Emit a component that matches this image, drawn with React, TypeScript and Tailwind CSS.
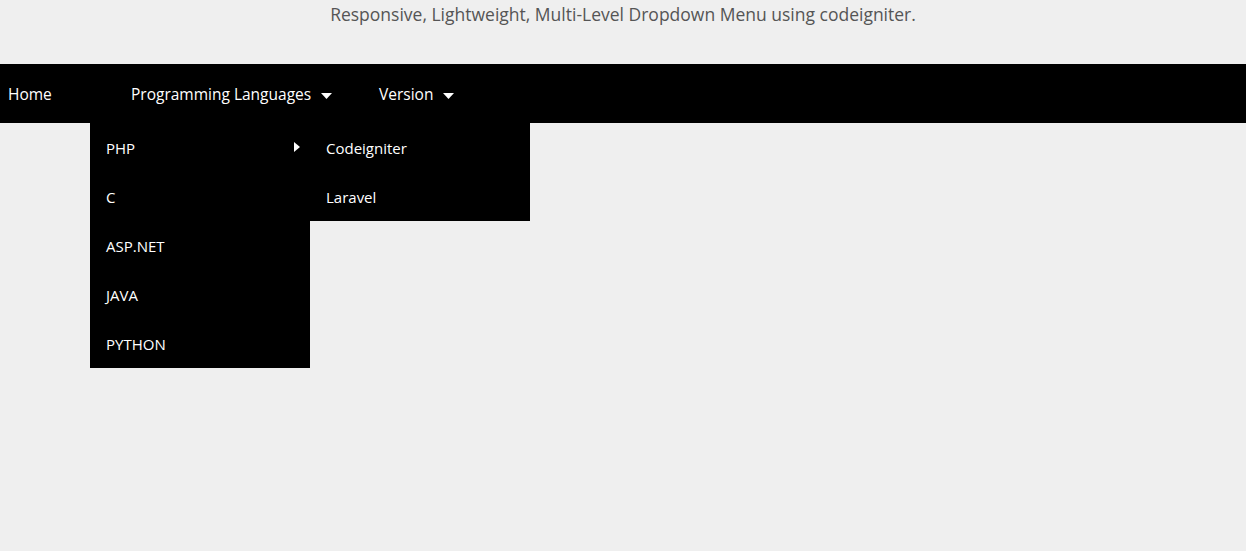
import React from 'react';

const FONT = { fontFamily: "'Open Sans', Roboto, sans-serif" };

function Caret({ dir = 'down' }: { dir?: 'down' | 'right' }) {
  if (dir === 'right') {
    return (
      <svg width="6" height="10" viewBox="0 0 6 10" className="fill-white">
        <path d="M0 0 L6 5 L0 10 Z" />
      </svg>
    );
  }
  return (
    <svg width="11" height="6" viewBox="0 0 11 6" className="fill-white">
      <path d="M0 0 L11 0 L5.5 6 Z" />
    </svg>
  );
}

const languages = ['PHP', 'C', 'ASP.NET', 'JAVA', 'PYTHON'];
const frameworks = ['Codeigniter', 'Laravel'];

export default function App() {
  return (
    <div className="min-h-[551px] w-full bg-[#efefef]" style={FONT}>
      <p className="h-[64px] pt-[2px] text-center text-[17.5px] leading-[24px] text-[#555]">
        Responsive, Lightweight, Multi-Level Dropdown Menu using codeigniter.
      </p>
      <nav className="h-[59px] bg-black text-white text-[15px]">
        <ul className="flex h-full items-center pt-[3px] text-[15.5px]">
          <li className="w-[90px] pl-[8px]">Home</li>
          <li className="relative flex h-full w-[248px] items-center pl-[41px]">
            <span>Programming Languages</span>
            <span className="ml-[10px] mt-[2px]"><Caret /></span>
            <ul className="absolute left-0 top-[56px] w-[220px] bg-black text-[15px]">
              {languages.map((l, i) => (
                <li key={l} className="relative flex h-[49px] items-center justify-between pl-[16px] pr-[10px] pt-[2px]">
                  <span>{l}</span>
                  {i === 0 && (
                    <>
                      <span className="-mt-[4px]"><Caret dir="right" /></span>
                      <ul className="absolute left-[220px] top-0 w-[220px] bg-black">
                        {frameworks.map(f => (
                          <li key={f} className="flex h-[49px] items-center pl-[16px] pt-[2px]">{f}</li>
                        ))}
                      </ul>
                    </>
                  )}
                </li>
              ))}
            </ul>
          </li>
          <li className="flex items-center pl-[41px]">
            <span>Version</span>
            <span className="ml-[10px] mt-[2px]"><Caret /></span>
          </li>
        </ul>
      </nav>
    </div>
  );
}
